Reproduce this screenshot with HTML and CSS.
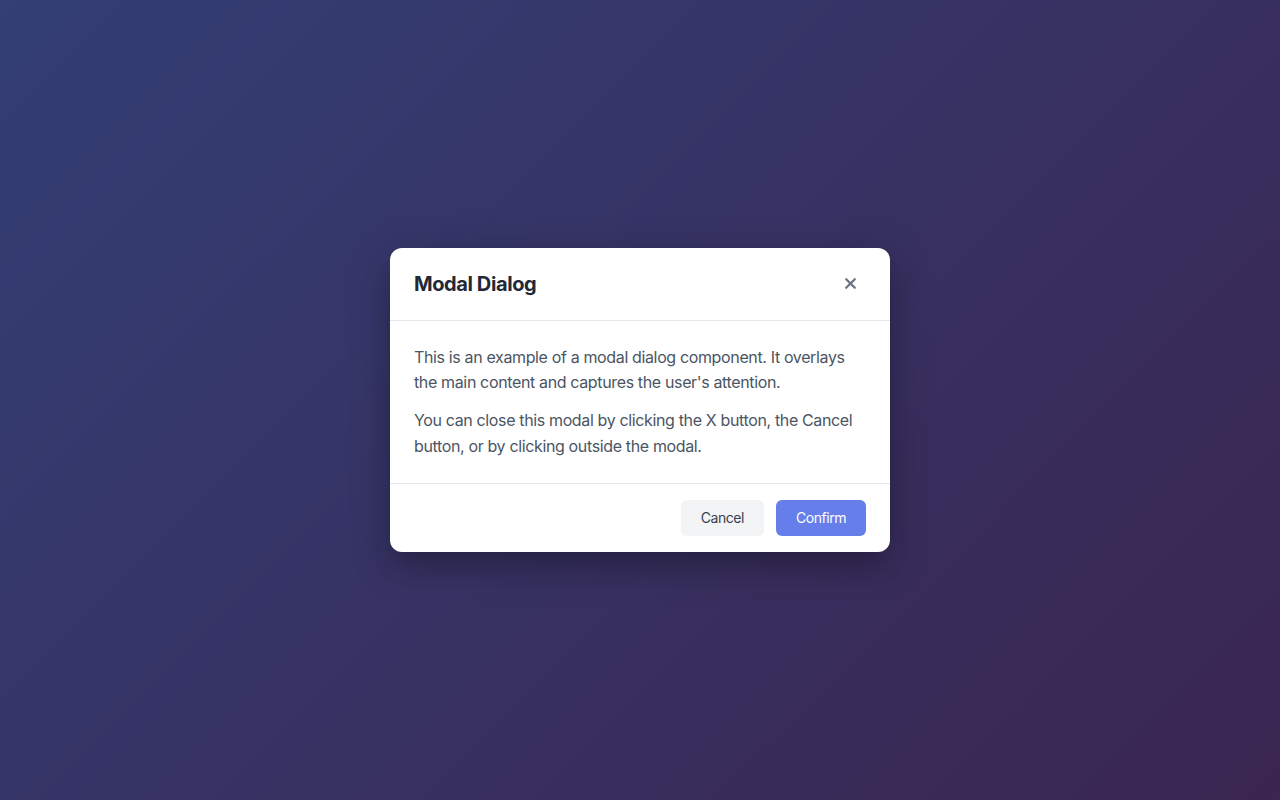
FILE: index.html
```html
<!DOCTYPE html>
<html>
<head>
<meta charset="utf-8">
<link rel="stylesheet" href="styles.css">
</head>
<body>
<div class="backdrop">
  <div class="overlay">
    <div class="modal">
      <div class="modal-header">
        <h2 class="modal-title">Modal Dialog</h2>
        <button class="close-btn" aria-label="Close">
          <svg width="11" height="11" viewBox="0 0 11 11"><path d="M1.2 1.2 L9.8 9.8 M9.8 1.2 L1.2 9.8" stroke="#6b7280" stroke-width="2.2" stroke-linecap="round"/></svg>
        </button>
      </div>
      <div class="modal-body">
        <p>This is an example of a modal dialog component. It overlays the main content and captures the user's attention.</p>
        <p>You can close this modal by clicking the X button, the Cancel button, or by clicking outside the modal.</p>
      </div>
      <div class="modal-footer">
        <button class="btn btn-secondary">Cancel</button>
        <button class="btn btn-primary">Confirm</button>
      </div>
    </div>
  </div>
</div>
</body>
</html>
```

FILE: styles.css
```css
* { box-sizing: border-box; }
html, body { margin: 0; padding: 0; height: 100%; }
body {
  font-family: Inter, "Noto Sans", "Liberation Sans", sans-serif;
}
.backdrop {
  width: 1280px;
  height: 800px;
  background: linear-gradient(135deg, #667eea 0%, #764ba2 100%);
}
.overlay {
  width: 100%;
  height: 100%;
  background: rgba(0, 0, 0, 0.5);
  display: flex;
  align-items: center;
  justify-content: center;
}
.modal {
  width: 500px;
  background: #ffffff;
  border-radius: 12px;
  box-shadow: 0 20px 25px -5px rgba(0,0,0,0.1), 0 10px 40px rgba(0,0,0,0.25);
  overflow: hidden;
}
.modal-header {
  display: flex;
  align-items: center;
  justify-content: space-between;
  padding: 24px;
  border-bottom: 1px solid #e5e7eb;
}
.modal-title {
  margin: 0;
  font-size: 20px;
  line-height: 24px;
  font-weight: 700;
  letter-spacing: -0.4px;
  color: #1f2937;
}
.close-btn {
  background: none;
  border: none;
  padding: 0;
  width: 32px;
  height: 32px;
  margin: -4px 0 -4px 0;
  display: flex;
  align-items: center;
  justify-content: center;
  cursor: pointer;
}
.modal-body {
  padding: 24px;
  border-bottom: 1px solid #e5e7eb;
}
.modal-body p {
  margin: 0 0 12px;
  font-size: 16px;
  line-height: 1.6;
  letter-spacing: -0.36px;
  color: #4b5563;
}
.modal-body p:last-child { margin-bottom: 0; }
.modal-footer {
  display: flex;
  justify-content: flex-end;
  gap: 12px;
  padding: 16px 24px;
}
.btn {
  font-family: inherit;
  font-size: 14px;
  line-height: 20px;
  letter-spacing: -0.45px;
  height: 36px;
  padding: 8px 20px;
  border: none;
  border-radius: 6px;
  cursor: pointer;
}
.btn-secondary {
  background: #f3f4f6;
  color: #374151;
}
.btn-primary {
  background: #667eea;
  color: #ffffff;
}
```
